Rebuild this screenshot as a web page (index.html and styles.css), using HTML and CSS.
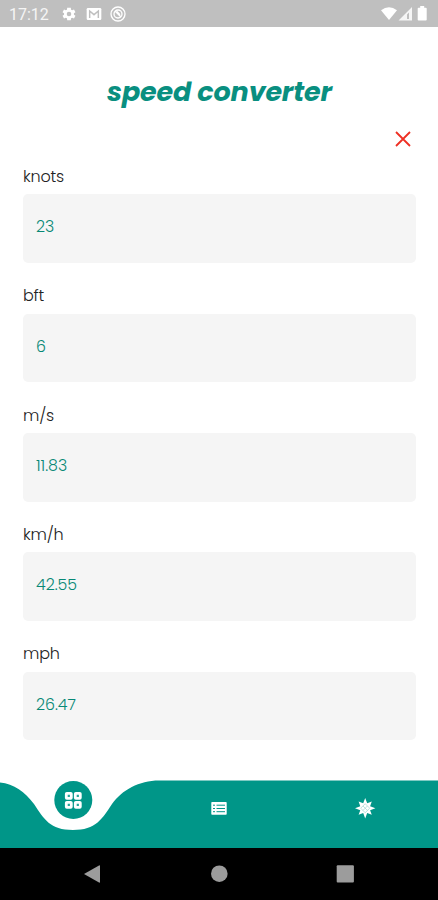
FILE: index.html
```html
<!DOCTYPE html>
<html lang="en">
<head>
<meta charset="utf-8">
<meta name="viewport" content="width=device-width, initial-scale=1">
<title>speed converter</title>
<link rel="stylesheet" href="styles.css">
</head>
<body>
<div class="phone">
  <header class="status">
    <span class="clock">17:12</span>
    <svg class="status-icon" viewBox="0 0 24 24"><path fill-rule="evenodd" d="M19.4 13a7.500 7.500 0 0 0 0-2l2.300-1.700-2.200-3.900-2.700 1.100-1.700-1-.4-2.900H9.300l-.4 2.900-1.700 1-2.700-1.100-2.200 3.900L4.600 11a7.500 7.500 0 0 0 0 2l-2.300 1.700 2.200 3.900 2.700-1.100 1.700 1 .4 2.900h5.400l.4-2.900 1.700-1 2.700 1.100 2.200-3.900zM12 8.600a3.400 3.400 0 1 1 0 6.800 3.400 3.400 0 0 1 0-6.800z"/></svg>
    <svg class="status-icon mail" viewBox="0 0 24 24"><rect x="1" y="3" width="22" height="18" rx="2"/><path d="M5.500 18V7.500L12 13l6.500-5.500V18"/></svg>
    <svg class="status-icon sync" viewBox="0 0 24 24"><circle cx="12" cy="12" r="10.500"/><circle cx="12" cy="12" r="6"/><path d="M7.500 7.500l9 9M10 8l5 5"/></svg>
    <span class="spacer"></span>
    <svg class="signals" viewBox="0 0 50 16"><path d="M0 4.300Q8 -2 16 4.300L8 14z"/><path fill-rule="evenodd" d="M17.500 14.500 31 1v13.500zM26 8.500v4.500h2V6.500z" opacity=".85"/><path d="M37.500 1.700h1.700V0h4v1.700h1.700q.8 0 .8.800v11.200q0 .8-.8.800h-7.400q-.8 0-.8-.8V2.500q0-.8.800-.8z"/></svg>
  </header>
  <main class="content">
    <h1 class="title">speed converter</h1>
    <div class="tools"><svg class="clear" viewBox="0 0 16 16"><path d="M1 1l14 14M15 1L1 15"/></svg></div>
    <section class="field"><div class="label">knots</div><div class="value">23</div></section>
    <section class="field"><div class="label">bft</div><div class="value">6</div></section>
    <section class="field"><div class="label">m/s</div><div class="value">11.83</div></section>
    <section class="field"><div class="label">km/h</div><div class="value">42.55</div></section>
    <section class="field"><div class="label">mph</div><div class="value">26.47</div></section>
  </main>
  <nav class="tabs">
    <svg viewBox="0 0 438 68">
      <path class="bar" d="M0 2.500C14 4 25 12 34 24C44 39 50 50 73 50S102 39 112 24C122 10 139 .5 159 .5H438V68H0z"/>
      <circle class="bar" cx="73.300" cy="20" r="19"/>
      <g class="grid"><rect x="66.300" y="13.300" width="5" height="5" rx=".5"/><rect x="75.300" y="13.300" width="5" height="5" rx=".5"/><rect x="66.300" y="22.300" width="5" height="5" rx=".5"/><rect x="75.300" y="22.300" width="5" height="5" rx=".5"/></g>
      <rect class="white" x="211.300" y="22" width="15.400" height="12.700" rx=".8"/>
      <path class="rules" d="M213 25.200h2M216.500 25.200h8.500M213 28.500h2M216.500 28.500h8.500M213 31.700h2M216.500 31.700h8.500"/>
      <path class="white" d="M365.200 18l2 5.300 4.600-1.700-1.700 4.600 5.300 2-5.300 2 1.700 4.600-4.600-1.700-2 5.300-2-5.300-4.600 1.700 1.700-4.600-5.300-2 5.300-2-1.700-4.600 4.600 1.700z"/>
      <path class="facets" d="M363 26l4.400 4.400M367.400 26l-4.400 4.400M365.200 23.700l4.500 4.500-4.500 4.500-4.500-4.500z"/>
    </svg>
  </nav>
  <footer class="system">
    <svg viewBox="0 0 438 52"><path d="M84 26 99 17.500Q100 17 100 18V34Q100 35 99 34.500z"/><circle cx="219.300" cy="25.700" r="8.300"/><rect x="336.700" y="17.300" width="17.200" height="17.200" rx="1"/></svg>
  </footer>
</div>
</body>
</html>
```
FILE: styles.css
```css
* { box-sizing: border-box; }
body { margin: 0; background: #fff; font-family: Poppins, Inter, sans-serif; }
svg { display: block; }
.phone { width: 438px; height: 900px; display: flex; flex-direction: column; overflow: hidden; }
.status { height: 27px; flex: none; background: #bfbfbf; display: flex; align-items: center; padding: 1px 8px 0 9px; }
.clock { font: 16px/20px Roboto, sans-serif; color: #f5f5f5; width: 52px; padding-top: 1px; }
.status-icon { width: 16px; height: 16px; fill: #fff; margin-right: 9px; }
.mail { margin-right: 8px; }
.mail path { fill: none; stroke: #bfbfbf; stroke-width: 2.2; }
.sync { fill: none; stroke: #fff; stroke-width: 2; }
.spacer { flex: 1; }
.signals { width: 50px; height: 16px; fill: #fff; margin-right: -1px; }
.content { flex: 1; padding: 47px 22px 0 23px; }
.title { margin: 0; height: 36px; text-align: center; font-size: 27px; line-height: 36px; font-weight: 700; font-style: italic; letter-spacing: -.15px; color: #098f80; white-space: nowrap; }
.tools { height: 54px; padding: 21px 5px 0 0; display: flex; justify-content: flex-end; }
.clear { width: 16px; height: 16px; fill: none; stroke: #ee3024; stroke-width: 1.8; }
.field { height: 119.35px; }
.label { height: 30.4px; font-size: 16px; line-height: 25px; letter-spacing: -.2px; color: #222; }
.value { height: 68.5px; border-radius: 5px; background: #f5f5f5; padding: 20px 13px; font-size: 15.8px; line-height: 25px; color: #078875; }
.label, .value { font-weight: 300; }
.tabs { height: 68px; flex: none; }
.bar { fill: #009688; }
.grid { fill: #fff; fill-opacity: .15; stroke: #fff; stroke-width: 2.8; }
.white { fill: #fff; }
.rules { stroke: #009688; stroke-width: 1; }
.facets { fill: none; stroke: #8fcfc8; stroke-width: .6; }
.system { height: 52px; flex: none; background: #000; fill: #9c9c9c; }
```
